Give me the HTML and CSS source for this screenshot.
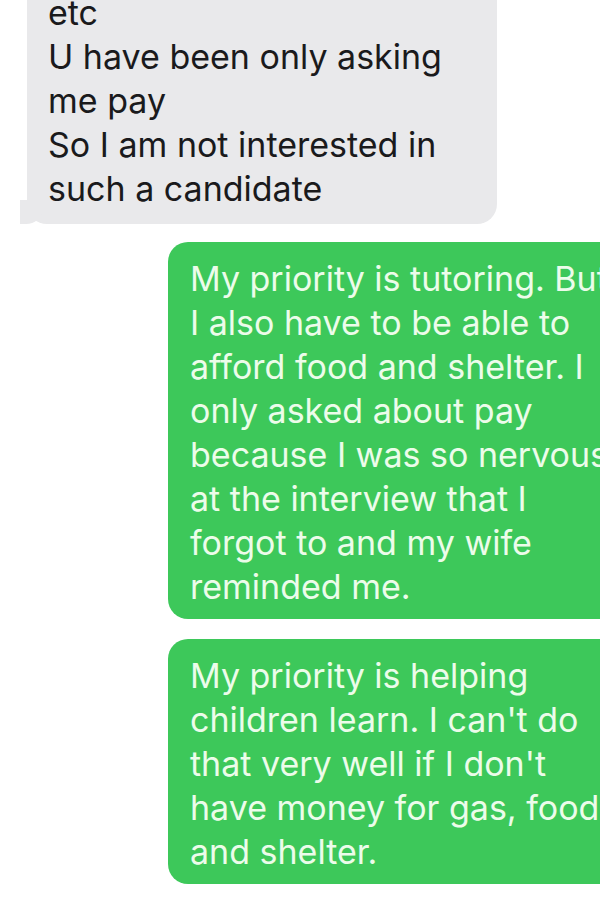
FILE: index.html
```html
<!DOCTYPE html>
<html lang="en">
<head>
  <meta charset="UTF-8">
  <title>Messages</title>
  <meta name="viewport" content="width=device-width, initial-scale=1.0">
  <link rel="stylesheet" href="styles.css">
</head>
<body>
  <div class="thread">
    <div class="bubble recibido">
      etc<br>
      U have been only asking<br>
      me pay<br>
      So I am not interested in<br>
      such a candidate
    </div>

    <div class="bubble enviado primero">
      My priority is tutoring. But<br>
      I also have to be able to<br>
      afford food and shelter. I<br>
      only asked about pay<br>
      because I was so nervous<br>
      at the interview that I<br>
      forgot to and my wife<br>
      reminded me.
    </div>

    <div class="bubble enviado">
      My priority is helping<br>
      children learn. I can't do<br>
      that very well if I don't<br>
      have money for gas, food,<br>
      and shelter.
    </div>
  </div>
</body>
</html>
```

FILE: styles.css
```css
* {
  box-sizing: border-box;
}
body {
  margin: 0;
  background: #fff;
  font-family: Inter, "Liberation Sans", Arial, sans-serif;
  overflow: hidden;
  height: 900px;
}
.thread {
  display: flex;
  flex-direction: column;
  width: 600px;
}
.bubble {
  font-size: 34px;
  line-height: 44px;
  white-space: nowrap;
  border-radius: 20px;
}
.recibido {
  position: relative;
  margin: -19px 0 0 27px;
  width: 470px;
  padding: 10px 20px 13px 21px;
  background: #e9e9eb;
  color: #1a1a1c;
}
/* colita del globo */
.recibido::before {
  content: "";
  position: absolute;
  left: -7px;
  bottom: 0;
  width: 22px;
  height: 24px;
  background: #e9e9eb;
  border-bottom-right-radius: 16px 14px;
}
.recibido::after {
  content: "";
  position: absolute;
  left: -26px;
  bottom: 0;
  width: 19px;
  height: 24px;
  background: #fff;
  border-bottom-right-radius: 10px;
}
.enviado {
  margin: 20px 0 0 168px;
  width: 480px;
  padding: 15px 22px 10px 22px;
  background: #3dc85a;
  color: #ecfcea;
}
.enviado.primero {
  margin-top: 18px;
}
```
